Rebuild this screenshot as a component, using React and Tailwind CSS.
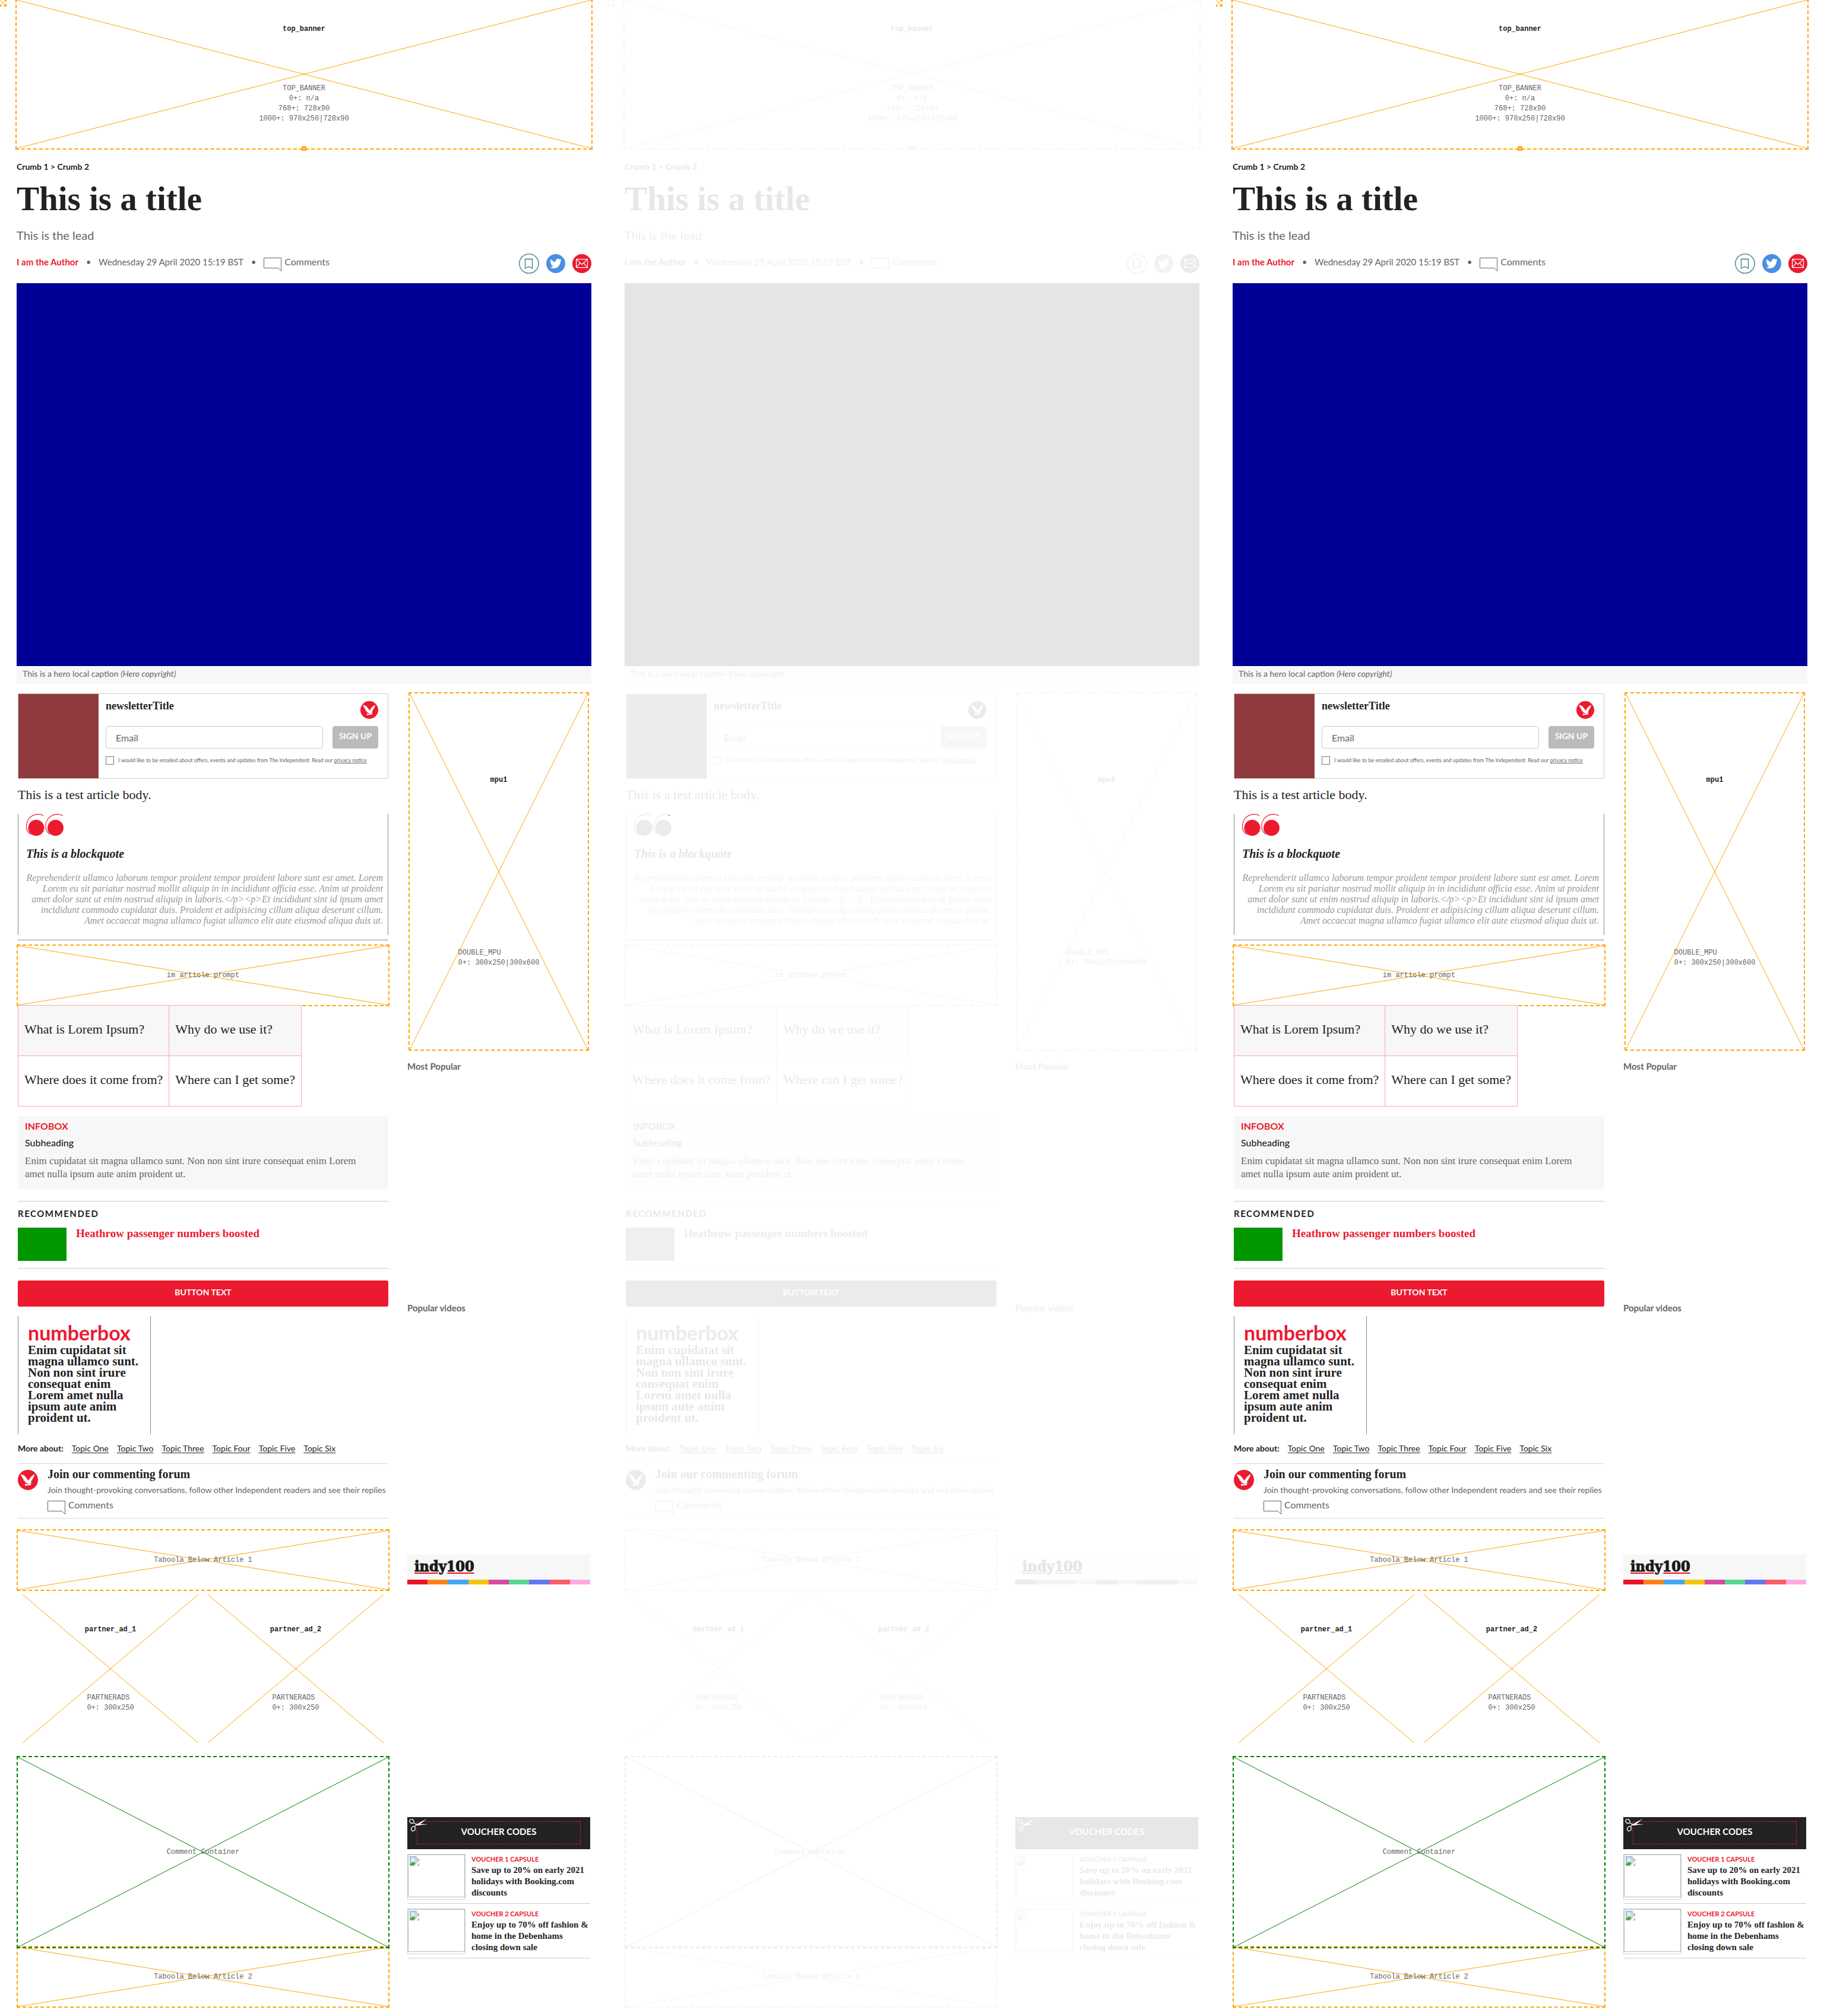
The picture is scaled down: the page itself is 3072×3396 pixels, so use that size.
import React, { useId } from "react";
import { FaTwitter } from "react-icons/fa";

const LEAD_SERIF = "font-['Liberation_Serif',serif]";

function Cross({ stroke }) {
  return (
    <svg className="absolute inset-0 h-full w-full" preserveAspectRatio="none" viewBox="0 0 100 100" aria-hidden="true">
      <path d="M0 0 100 100M100 0 0 100" stroke={stroke} strokeWidth="1" fill="none" vectorEffect="non-scaling-stroke" />
    </svg>
  );
}

function Slot({ label, className, stroke = "#ffa500" }) {
  return (
    <div className={"relative flex items-center justify-center font-['Liberation_Mono',monospace] text-[12px] leading-[18px] text-[#666] outline-2 outline-dashed " + className}>
      <Cross stroke={stroke} />
      <span className="relative">{label}</span>
    </div>
  );
}

function AdSlot({ name, lines, className, labelPad, linesPad, center }) {
  return (
    <div className={"relative grid grid-rows-2 justify-items-center font-['Liberation_Mono',monospace] text-[12px] " + className}>
      <Cross stroke="#ffa500" />
      <strong className={"relative leading-[18px] text-[#222] " + labelPad}>{name}</strong>
      <div className={"relative leading-[17px] text-[#666] " + linesPad + (center ? " text-center" : "")}>
        {lines.map((l) => (
          <p key={l}>{l}</p>
        ))}
      </div>
    </div>
  );
}

function Eagle({ className }) {
  return (
    <svg className={className} viewBox="0 0 30 30" aria-hidden="true">
      <circle cx="15" cy="15" r="15" fill="#ec1a2e" />
      <path
        fill="#fff"
        d="M4 6.800c2.500-.2 4.500.7 6.200 2.300 2 1.900 3.400 4.200 4.800 6.200l1.200.2c1.200-2.600 2.600-4.300 4.300-5.900 1.400-1.400 2.800-2.500 4.300-3.400-.2 2.400-1 4.600-2.300 6.600-1.100 1.800-2.400 3.300-3 5l1.200 1.200-1.600.4c.2 1 .6 1.700 1.300 2.500l-1.500-.1.300 1.100-1.600-.5-.6.7-2.300-.2c-1.200 0-2 .6-2.700 1.400l-1-.8.700-.9-1.700-.2.900-1.200c1.600-.1 2.800-.5 4-1.300-2-.2-3.800-.9-5-2.400l2 .1c-2.200-.9-3.600-2.100-4.200-3.700l1.800.4C7.400 12.800 6.200 11.500 5.600 10l1.200.3C5.400 9.200 4.500 8.100 4 6.800z"
      />
      <path stroke="#ec1a2e" strokeWidth=".6" fill="none" d="M13 21.700l4.500-1.200" />
    </svg>
  );
}

function CommentsLink() {
  return (
    <a href="#comments" className="flex items-start gap-[5px] text-[16px] leading-5 text-[#666]">
      <svg className="mt-[3px] h-[23px] w-[30px]" viewBox="0 0 30 23" fill="none" stroke="#666" aria-hidden="true">
        <path d="M.5.5h29v22l-5-5H.5z" />
      </svg>
      <span>Comments</span>
    </a>
  );
}

function Quotes() {
  return (
    <svg className="block h-[38px] w-[64px]" viewBox="0 0 64 38" aria-hidden="true">
      <g fill="#ec1a2e">
        <circle cx="17" cy="23.500" r="13.500" />
        <circle cx="49.500" cy="23.500" r="13.500" />
      </g>
      <g fill="none" stroke="#ec1a2e" strokeWidth="1.200">
        <path d="M29 3C24-.5 15-.2 9 4 2 9-.8 17 1 25c1 4 3 7 7 9.500" />
        <path d="M61.500 3C56.500-.5 47.500-.2 41.500 4c-7 5-9.800 13-8 21 1 4 3 7 7 9.500" />
      </g>
    </svg>
  );
}

function Newsletter() {
  const id = useId();
  return (
    <form className="flex h-36 border border-[#ccc]" onSubmit={(e) => e.preventDefault()}>
      <div className="w-[135px] shrink-0 bg-[#8f3a3d]" />
      <div className="min-w-0 flex-1 pr-4 pl-3">
        <div className="flex items-start justify-between">
          <h3 className={"pt-2 text-[18px] leading-6 font-bold text-[#222] " + LEAD_SERIF}>newsletterTitle</h3>
          <Eagle className="mt-3 size-[30px]" />
        </div>
        <div className="mt-3 flex gap-4">
          <input
            type="email"
            aria-label="Email"
            placeholder="Email"
            className="h-[38px] min-w-0 flex-1 rounded border border-[#ccc] bg-white px-4 text-[16px] placeholder:text-[#666]"
          />
          <button type="submit" className="h-[38px] w-[77px] rounded bg-[#bbb] pb-1 text-[14px] leading-5 font-bold text-white">
            SIGN UP
          </button>
        </div>
        <div className="mt-[13px] flex items-start gap-[7px]">
          <input id={id} type="checkbox" className="size-[14px] shrink-0 appearance-none border border-[#777] bg-white" />
          <label htmlFor={id} className="text-[9px] leading-[14px] whitespace-nowrap text-[#666]">
            I would like to be emailed about offers, events and updates from The Independent. Read our{" "}
            <a href="#privacy" className="underline">
              privacy notice
            </a>
          </label>
        </div>
      </div>
    </form>
  );
}

function Blockquote() {
  return (
    <>
      <blockquote className={"mt-[17px] border-x border-[#888] pr-2 pb-[15px] pl-[13px] italic " + LEAD_SERIF}>
        <Quotes />
        <p className="mt-[15px] text-[20px] leading-7 font-bold text-[#222]">This is a blockquote</p>
        <p className="mt-[18px] text-right text-[16px] leading-[18px] whitespace-nowrap text-[#999]">
          Reprehenderit ullamco laborum tempor proident tempor proident labore sunt est amet. Lorem
          <br />
          Lorem eu sit pariatur nostrud mollit aliquip in in incididunt officia esse. Anim ut proident
          <br />
          amet dolor sunt ut enim nostrud aliquip in laboris.{"</p><p>"}Et incididunt sint id ipsum amet
          <br />
          incididunt commodo cupidatat duis. Proident et adipisicing cillum aliqua deserunt cillum.
          <br />
          Amet occaecat magna ullamco fugiat ullamco elit aute eiusmod aliqua duis ut.
        </p>
      </blockquote>
      <hr className="mt-2 border-[#888]" />
    </>
  );
}

const CELL = "h-[85px] border border-[#f7a9b1] px-[10px] pb-1 text-left font-normal whitespace-nowrap";

function Questions() {
  return (
    <table className={"relative border-collapse text-[22px] leading-[30px] text-[#222] " + LEAD_SERIF}>
      <thead>
        <tr className="bg-[#f7f7f7]">
          <th className={CELL}>What is Lorem Ipsum?</th>
          <th className={CELL}>Why do we use it?</th>
        </tr>
      </thead>
      <tbody>
        <tr>
          <td className={CELL}>Where does it come from?</td>
          <td className={CELL}>Where can I get some?</td>
        </tr>
      </tbody>
    </table>
  );
}

const TOPICS = ["Topic One", "Topic Two", "Topic Three", "Topic Four", "Topic Five", "Topic Six"];

function Article() {
  return (
    <div className="min-w-0">
      <Newsletter />
      <p className={"mt-3 text-[22px] leading-[30px] text-[#222] " + LEAD_SERIF}>This is a test article body.</p>
      <Blockquote />
      <Slot label="im article prompt" className="mt-[9px] h-[100px] outline-[#ffa500]" />
      <Questions />

      <section className="mt-4 bg-[#f7f7f7] px-3 pt-[5px] pb-[14px]">
        <h3 className="text-[16px] leading-6 font-bold text-[#ec1a2e]">INFOBOX</h3>
        <h4 className="mt-1 text-[16px] leading-6 font-medium text-[#222]">Subheading</h4>
        <p className={"mt-2 text-[17px] leading-[22px] text-[#666] " + LEAD_SERIF}>
          Enim cupidatat sit magna ullamco sunt. Non non sint irure consequat enim Lorem
          <br />
          amet nulla ipsum aute anim proident ut.
        </p>
      </section>

      <section className="mt-5 border-y border-[#ccc] pt-2 pb-3">
        <h3 className="text-[15px] leading-6 font-bold tracking-widest text-[#222]">RECOMMENDED</h3>
        <div className="mt-3 flex gap-4">
          <div className="h-14 w-[82px] bg-[#009600]" />
          <a href="#heathrow" className={"text-[19px] leading-[19px] font-bold text-[#ec1a2e] " + LEAD_SERIF}>
            Heathrow passenger numbers boosted
          </a>
        </div>
      </section>

      <button type="button" className="mt-5 block h-11 w-full rounded-[3px] bg-[#ec1a2e] pb-1 text-[14px] leading-5 font-bold text-white">
        BUTTON TEXT
      </button>

      <section className="mt-4 w-[224px] border-x border-[#888] pt-2 pb-[18px] pl-4">
        <h3 className="text-[34px] leading-10 font-bold text-[#ec1a2e]">numberbox</h3>
        <p className={"text-[21px] leading-[19px] font-bold text-[#222] " + LEAD_SERIF}>
          Enim cupidatat sit
          <br />
          magna ullamco sunt.
          <br />
          Non non sint irure
          <br />
          consequat enim
          <br />
          Lorem amet nulla
          <br />
          ipsum aute anim
          <br />
          proident ut.
        </p>
      </section>

      <nav className="mt-[14px] flex gap-[14px] text-[14px] leading-5 whitespace-nowrap text-[#222]">
        <strong>More about:</strong>
        {TOPICS.map((t) => (
          <a key={t} href="#topic" className="underline underline-offset-2">
            {t}
          </a>
        ))}
      </nav>

      <section className="mt-[15px] flex gap-4 border-y border-[#d9d9d9] pb-[6px]">
        <Eagle className="mt-[10px] size-[34px] shrink-0" />
        <div className="pt-1">
          <h3 className={"text-[20px] leading-[26px] font-bold text-[#222] " + LEAD_SERIF}>Join our commenting forum</h3>
          <p className="mt-1 mb-[5px] text-[14px] leading-5 whitespace-nowrap text-[#666]">
            Join thought-provoking conversations, follow other Independent readers and see their replies
          </p>
          <CommentsLink />
        </div>
      </section>

      <Slot label="Taboola Below Article 1" className="mt-5 h-[100px] outline-[#ffa500]" />
      <div className="grid grid-cols-2 gap-4 p-2">
        {["partner_ad_1", "partner_ad_2"].map((n) => (
          <AdSlot key={n} name={n} lines={["PARTNERADS", "0+: 300x250"]} className="h-[250px]" labelPad="pt-[50px]" linesPad="pt-[41px]" />
        ))}
      </div>
      <Slot label="Comment Container" stroke="#008000" className="z-10 mt-4 h-[320px] outline-[#008000]" />
      <Slot label="Taboola Below Article 2" className="h-[100px] outline-[#ffa500]" />
    </div>
  );
}

function Indy() {
  return (
    <section>
      <div className="h-[43px] bg-[#f7f7f7] pl-3">
        <a
          href="#indy100"
          className="relative inline-block font-['DejaVu_Serif_Condensed','DejaVu_Serif',serif] text-[25px] leading-[42px] font-bold text-[#1a1a1a] [-webkit-text-stroke:1px_#1a1a1a]"
        >
          <svg className="absolute top-[31px] left-0 h-[2px] w-full" viewBox="0 0 102 2" preserveAspectRatio="none" aria-hidden="true">
            <path d="M0 0h40v2H0zM56 0h46v2H56z" fill="#ec1228" />
          </svg>
          <span className="relative">indy100</span>
        </a>
      </div>
      <div className="grid h-2 grid-cols-9">
        <i className="bg-[#ec1228]" />
        <i className="bg-[#ff8214]" />
        <i className="bg-[#43a8f0]" />
        <i className="bg-[#f1c40f]" />
        <i className="bg-[#d84a9f]" />
        <i className="bg-[#58d88d]" />
        <i className="bg-[#6577f0]" />
        <i className="bg-[#ff5c66]" />
        <i className="bg-[#ffabe0]" />
      </div>
    </section>
  );
}

function BrokenImage() {
  return (
    <div className="h-[77px] w-[98px] shrink-0 border border-[#d3d3d3]">
      <div className="h-[72px] border border-[#bbb] p-[2px]">
        <svg className="size-4" viewBox="0 0 16 16" aria-hidden="true">
          <path d="M.5.500h10.500l4.500 4.500v10.500H.5z" fill="#c6d9f5" stroke="#9a9a9a" />
          <path d="M11 .500V5h4.500" fill="#fff" stroke="#9a9a9a" />
          <path d="M3 6.500c0-1.500 1.500-1.500 1.800-1.300C5.300 4 7.500 4.200 7.500 5.700c1.200 0 1.200 1.300.3 1.300H3.500z" fill="#fff" />
          <path d="M1 15v-2c3-4 6-4 9-1l-3 3z" fill="#4fae2e" />
          <path d="M8 15.900 16 8v3l-4 4.900z" fill="#fff" />
        </svg>
      </div>
    </div>
  );
}

const VOUCHERS = [
  ["VOUCHER 1 CAPSULE", ["Save up to 20% on early 2021", "holidays with Booking.com", "discounts"]],
  ["VOUCHER 2 CAPSULE", ["Enjoy up to 70% off fashion &", "home in the Debenhams", "closing down sale"]],
];

function Vouchers() {
  return (
    <section>
      <div className="relative h-[54px] bg-[#222] px-4 pt-[7px] pb-2">
        <h3 className="flex h-full items-center justify-center border border-dashed border-[#ec1a2e] pb-[6px] text-[15px] leading-5 font-bold text-white">
          VOUCHER CODES
        </h3>
        <svg className="absolute top-[2px] left-[3px] h-[22px] w-8" viewBox="0 0 32 22" fill="none" stroke="#fff" strokeWidth="1.300" aria-hidden="true">
          <ellipse cx="4.500" cy="5" rx="4" ry="3.200" transform="rotate(35 4.500 5)" />
          <ellipse cx="7" cy="17.500" rx="3.200" ry="4" transform="rotate(25 7 17.500)" />
          <path d="M7.500 7.500 13 10.500M9 14l3.500-3.500" />
          <path d="M11 11 30 .500 16 12zM11.500 9.500 32 10 14 12z" fill="#fff" stroke="none" />
        </svg>
      </div>
      {VOUCHERS.map(([cap, lines]) => (
        <article key={cap} className="flex gap-[10px] border-b border-[#ccc] pt-2 pb-[6px]">
          <BrokenImage />
          <div className="pt-px">
            <p className="text-[11px] leading-4 font-bold text-[#ec1a2e]">{cap}</p>
            <a href="#voucher" className={"mt-px block text-[15px] leading-[19px] font-bold whitespace-nowrap text-[#222] " + LEAD_SERIF}>
              {lines.map((l) => (
                <span key={l} className="block">
                  {l}
                </span>
              ))}
            </a>
          </div>
        </article>
      ))}
    </section>
  );
}

function Sidebar() {
  return (
    <aside>
      <AdSlot
        name="mpu1"
        lines={["DOUBLE_MPU", "0+: 300x250|300x600"]}
        className="mx-1 h-[600px] outline-2 outline-dashed outline-[#ffa500]"
        labelPad="pt-[137px]"
        linesPad="pt-[129px]"
      />
      <section className="mt-4 min-h-[407px]">
        <h3 className="text-[15px] leading-6 font-bold text-[#666]">Most Popular</h3>
      </section>
      <section className="min-h-[427px]">
        <h3 className="text-[15px] leading-6 font-bold text-[#666]">Popular videos</h3>
      </section>
      <div className="min-h-[443px]">
        <Indy />
      </div>
      <Vouchers />
    </aside>
  );
}

function Page() {
  return (
    <div className="relative overflow-hidden bg-white pb-4 font-['Lato',sans-serif]">
      <div className="absolute top-0 left-0 size-[9px] outline-2 outline-dashed outline-[#ffa500]">
        <Cross stroke="#ffa500" />
      </div>
      <header className="px-7">
        <div className="relative">
          <AdSlot
            name="top_banner"
            lines={["TOP_BANNER", "0+: n/a", "768+: 728x90", "1000+: 970x250|728x90"]}
            className="h-[250px] outline-2 outline-dashed outline-[#ffa500]"
            labelPad="pt-10"
            linesPad="pt-4"
            center
          />
          <svg className="absolute -bottom-1 left-1/2 size-2 -translate-x-1/2" viewBox="0 0 8 8" aria-hidden="true">
            <path d="M0 0h8v8H0z" fill="#ffa500" />
            <ellipse cx="4" cy="4" rx="1.500" ry="2" fill="none" stroke="#fff" strokeWidth=".7" />
          </svg>
        </div>
        <nav className="mt-[21px] text-[14px] leading-5 font-bold text-[#222]">
          <a href="#crumb1">Crumb 1</a> &gt; <a href="#crumb2">Crumb 2</a>
        </nav>
        <h1 className={"mt-3 text-[57px] leading-[64px] font-bold text-[#222] " + LEAD_SERIF}>This is a title</h1>
        <p className="mt-[15px] text-[20px] leading-7 text-[#666]">This is the lead</p>
        <div className="mt-[17px] flex h-[34px] items-center justify-between">
          <div className="flex items-start text-[15px] leading-5 text-[#666]">
            <a href="#author" className="font-bold text-[#ec1a2e]">
              I am the Author
            </a>
            <span className="w-[34px] text-center">•</span>
            <span>Wednesday 29 April 2020 15:19 BST</span>
            <span className="w-[34px] text-center">•</span>
            <CommentsLink />
          </div>
          <div className="flex items-center gap-3">
            <button type="button" aria-label="Bookmark">
              <svg className="block size-[34px]" viewBox="0 0 34 34" fill="none" stroke="#2f8080" strokeWidth="1.300" aria-hidden="true">
                <circle cx="17" cy="17" r="16.200" />
                <path d="M10.500 9.500h12v15.500l-6-2.800-6 2.800z" />
              </svg>
            </button>
            <a href="#twitter" aria-label="Twitter" className="flex size-8 items-center justify-center rounded-full bg-[#4a90e2]">
              <FaTwitter className="size-5 text-white" />
            </a>
            <a href="#mail" aria-label="Email" className="flex size-8 items-center justify-center rounded-full bg-[#ec1a2e]">
              <svg className="size-5" viewBox="0 0 20 20" fill="none" stroke="#fff" strokeWidth="1.200" aria-hidden="true">
                <path d="M.600 2.600h18.800v14H.6zM.6 2.600 10 11.500 19.400 2.600M.6 16.600 7 9M19.400 16.600 13 9" />
              </svg>
            </a>
          </div>
        </div>
        <figure className="mt-4">
          <div className="aspect-[3/2] bg-[#000096]" />
          <figcaption className="bg-[#f7f7f7] pb-1 pl-[10px] text-[14px] leading-[26px] text-[#666]">
            This is a hero local caption <em>(Hero copyright)</em>
          </figcaption>
        </figure>
      </header>
      <main className="mt-4 grid grid-cols-[minmax(0,1fr)_308px] gap-8 px-[30px]">
        <Article />
        <Sidebar />
      </main>
    </div>
  );
}

function DiffMarks() {
  return (
    <svg className="absolute top-0 left-0 h-[1400px] w-[1000px]" viewBox="0 0 1000 1400" aria-hidden="true">
      <path
        fill="#ff0"
        d="M884 451h1v3h-1zM927 444h1v1h-1zM944 439h1v1h-1zM53 1373h2v1h-2zM69 1372h2v1h-2zM53 1382h2v1h-2zM46 1392h1v1h-1zM96 1371h2v1h-2z"
      />
      <path fill="#f00" d="M102 1373h2v1h-2z" />
    </svg>
  );
}

export default function App() {
  return (
    <div className="grid grid-cols-3 items-start bg-white">
      <Page />
      <div className="relative">
        <div className="opacity-10 grayscale">
          <Page />
        </div>
        <DiffMarks />
      </div>
      <Page />
    </div>
  );
}
